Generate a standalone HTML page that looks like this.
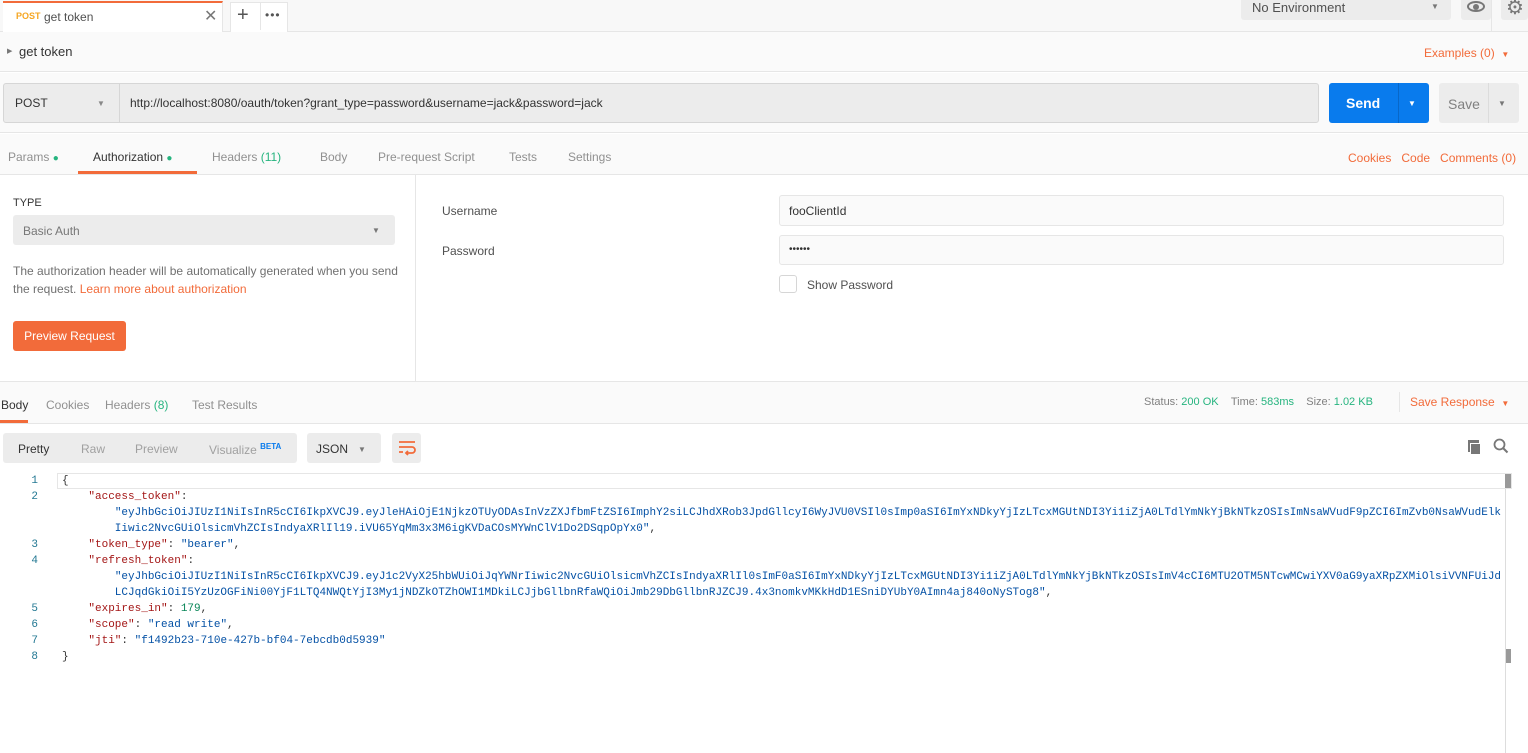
<!DOCTYPE html>
<html><head><meta charset="utf-8"><style>
*{box-sizing:border-box;margin:0;padding:0}
body{width:1528px;height:753px;overflow:hidden;background:#fff;font-family:"Liberation Sans",sans-serif;font-size:12px;color:#505050;position:relative}
.a{position:absolute}
.or{color:#f26b3a}
.gr{color:#26b47f}
.mono{font-family:"Liberation Mono",monospace;font-size:11px;white-space:pre;line-height:16px}
</style></head><body>
<div class="a" style="left:0;top:0;width:1528px;height:32px;background:#f8f8f8;border-bottom:1px solid #e6e6e6"></div>
<div class="a" style="left:3px;top:1px;height:31px;background:#fff;border-top:2px solid #f26b3a;border-right:1px solid #e6e6e6;width:220px"></div>
<div class="a" style="left:16px;top:11px;font-size:9px;font-weight:bold;color:#f5a623">POST</div>
<div class="a" style="left:44px;top:10px;font-size:12px;color:#505050">get token</div>
<div class="a" style="left:204px;top:6px;font-size:16px;color:#777">✕</div>
<div class="a" style="left:230px;top:2px;width:58px;height:30px;background:#fff;border:1px solid #e6e6e6;border-bottom:none"></div>
<div class="a" style="left:260px;top:2px;width:1px;height:28px;background:#e6e6e6"></div>
<div class="a" style="left:237px;top:4px;font-size:20px;color:#555">+</div>
<div class="a" style="left:265px;top:8px;font-size:12px;color:#555;letter-spacing:1px">•••</div>
<div class="a" style="left:1491px;top:0;width:1px;height:32px;background:#e6e6e6"></div>
<div class="a" style="left:1241px;top:0;width:210px;height:20px;background:#ececec;border-radius:0 0 3px 3px"></div>
<div class="a" style="left:1252px;top:0;font-size:13px;color:#505050">No Environment</div>
<div class="a" style="left:1431px;top:2px;font-size:8px;color:#777">▼</div>
<div class="a" style="left:1461px;top:0;width:30px;height:20px;background:#ececec;border-radius:0 0 3px 3px"></div>
<div class="a" style="left:1467px;top:1px;width:18px;height:11px;border:2px solid #777;border-radius:50%"></div>
<div class="a" style="left:1473px;top:4px;width:6px;height:6px;background:#777;border-radius:50%"></div>
<div class="a" style="left:1501px;top:0;width:27px;height:20px;background:#ececec;border-radius:0 0 3px 3px"></div>
<div class="a" style="left:1506px;top:-5px;font-size:20px;color:#777">⚙</div>
<div class="a" style="left:0;top:32px;width:1528px;height:40px;background:#fafafa;border-bottom:1px solid #e6e6e6"></div>
<div class="a" style="left:7px;top:47px;font-size:7px;color:#777">▶</div>
<div class="a" style="left:19px;top:44px;font-size:13px;color:#333">get token</div>
<div class="a or" style="left:1424px;top:46px;font-size:12px">Examples (0)&nbsp;&nbsp;<span style="font-size:8px">▼</span></div>
<div class="a" style="left:0;top:73px;width:1528px;height:60px;background:#fafafa;border-bottom:1px solid #e6e6e6"></div>
<div class="a" style="left:3px;top:83px;width:1316px;height:40px;background:#ececec;border:1px solid #d6d6d6;border-radius:3px"></div>
<div class="a" style="left:119px;top:84px;width:1px;height:38px;background:#d6d6d6"></div>
<div class="a" style="left:15px;top:96px;font-size:12px;color:#333">POST</div>
<div class="a" style="left:97px;top:99px;font-size:8px;color:#888">▼</div>
<div class="a" style="left:130px;top:96px;font-size:12px;color:#333">http://localhost:8080/oauth/token?grant_type=password&amp;username=jack&amp;password=jack</div>
<div class="a" style="left:1329px;top:83px;width:100px;height:40px;background:#097bed;border-radius:3px"></div>
<div class="a" style="left:1398px;top:83px;width:1px;height:40px;background:#0867c8"></div>
<div class="a" style="left:1346px;top:95px;font-size:14px;font-weight:bold;color:#fff">Send</div>
<div class="a" style="left:1408px;top:99px;font-size:8px;color:#fff">▼</div>
<div class="a" style="left:1439px;top:83px;width:80px;height:40px;background:#ececec;border-radius:3px"></div>
<div class="a" style="left:1488px;top:83px;width:1px;height:40px;background:#dcdcdc"></div>
<div class="a" style="left:1448px;top:96px;font-size:14px;color:#808080">Save</div>
<div class="a" style="left:1498px;top:99px;font-size:8px;color:#777">▼</div>
<div class="a" style="left:0;top:134px;width:1528px;height:41px;background:#fafafa;border-bottom:1px solid #e6e6e6"></div>
<div class="a" style="left:8px;top:150px;color:#909090">Params <span class="gr" style="font-size:10px">●</span></div>
<div class="a" style="left:93px;top:150px;color:#333">Authorization <span class="gr" style="font-size:10px">●</span></div>
<div class="a" style="left:78px;top:171px;width:119px;height:3px;background:#f26b3a"></div>
<div class="a" style="left:212px;top:150px;color:#909090">Headers <span class="gr">(11)</span></div>
<div class="a" style="left:320px;top:150px;color:#909090">Body</div>
<div class="a" style="left:378px;top:150px;color:#909090">Pre-request Script</div>
<div class="a" style="left:509px;top:150px;color:#909090">Tests</div>
<div class="a" style="left:568px;top:150px;color:#909090">Settings</div>
<div class="a or" style="left:1348px;top:151px">Cookies&nbsp;&nbsp;&nbsp;Code&nbsp;&nbsp;&nbsp;Comments (0)</div>
<div class="a" style="left:415px;top:175px;width:1px;height:206px;background:#e6e6e6"></div>
<div class="a" style="left:13px;top:197px;font-size:11px;color:#333">TYPE</div>
<div class="a" style="left:13px;top:215px;width:382px;height:30px;background:#ececec;border-radius:3px"></div>
<div class="a" style="left:23px;top:224px;color:#777">Basic Auth</div>
<div class="a" style="left:372px;top:226px;font-size:8px;color:#777">▼</div>
<div class="a" style="left:13px;top:262px;line-height:18px;color:#707070;width:400px">The authorization header will be automatically generated when you send the request. <span class="or">Learn more about authorization</span></div>
<div class="a" style="left:13px;top:321px;width:113px;height:30px;background:#f26b3a;border-radius:3px;color:#fff;font-size:12px;line-height:30px;text-align:center">Preview Request</div>
<div class="a" style="left:442px;top:204px;color:#505050">Username</div>
<div class="a" style="left:442px;top:244px;color:#505050">Password</div>
<div class="a" style="left:779px;top:195px;width:725px;height:31px;background:#fafafa;border:1px solid #e6e6e6;border-radius:3px"></div>
<div class="a" style="left:789px;top:204px;color:#333">fooClientId</div>
<div class="a" style="left:779px;top:235px;width:725px;height:30px;background:#fafafa;border:1px solid #e6e6e6;border-radius:3px"></div>
<div class="a" style="left:789px;top:244px;color:#333;font-size:10px">••••••</div>
<div class="a" style="left:779px;top:275px;width:18px;height:18px;border:1px solid #d6d6d6;border-radius:3px;background:#fff"></div>
<div class="a" style="left:807px;top:278px;color:#505050">Show Password</div>
<div class="a" style="left:0;top:381px;width:1528px;height:43px;background:#fafafa;border-top:1px solid #e6e6e6;border-bottom:1px solid #e6e6e6"></div>
<div class="a" style="left:1px;top:398px;color:#333">Body</div>
<div class="a" style="left:0;top:420px;width:28px;height:3px;background:#f26b3a"></div>
<div class="a" style="left:46px;top:398px;color:#909090">Cookies</div>
<div class="a" style="left:105px;top:398px;color:#909090">Headers <span class="gr">(8)</span></div>
<div class="a" style="left:192px;top:398px;color:#909090">Test Results</div>
<div class="a" style="left:1144px;top:396px;font-size:11px;color:#808080">Status: <span class="gr">200 OK</span>&nbsp;&nbsp;&nbsp;&nbsp;Time: <span class="gr">583ms</span>&nbsp;&nbsp;&nbsp;&nbsp;Size: <span class="gr">1.02 KB</span></div>
<div class="a" style="left:1399px;top:392px;width:1px;height:20px;background:#e6e6e6"></div>
<div class="a or" style="left:1410px;top:395px;font-size:12px">Save Response&nbsp;&nbsp;<span style="font-size:8px">▼</span></div>
<div class="a" style="left:3px;top:433px;width:294px;height:30px;background:#ececec;border-radius:3px"></div>
<div class="a" style="left:18px;top:442px;color:#333">Pretty</div>
<div class="a" style="left:81px;top:442px;color:#a0a0a0">Raw</div>
<div class="a" style="left:135px;top:442px;color:#a0a0a0">Preview</div>
<div class="a" style="left:209px;top:442px;color:#a0a0a0">Visualize <sup style="color:#097bed;font-size:8px;font-weight:bold">BETA</sup></div>
<div class="a" style="left:307px;top:433px;width:74px;height:30px;background:#ececec;border-radius:3px"></div>
<div class="a" style="left:316px;top:442px;color:#333">JSON</div>
<div class="a" style="left:358px;top:445px;font-size:8px;color:#777">▼</div>
<div class="a" style="left:392px;top:433px;width:29px;height:30px;background:#ececec;border-radius:3px"></div>
<svg class="a" style="left:397px;top:440px" width="20" height="16" viewBox="0 0 20 16"><path d="M2 2h16M2 7h13a3 3 0 0 1 0 6H9M11 11l-2 2 2 2M2 12h4" stroke="#f26b3a" stroke-width="1.8" fill="none"/></svg>
<div class="a" style="left:1468px;top:440px;width:11px;height:12px;background:#777"></div>
<div class="a" style="left:1470px;top:443px;width:11px;height:12px;background:#777;border:1px solid #fff"></div>
<svg class="a" style="left:1493px;top:438px" width="16" height="16"><circle cx="6.5" cy="6.5" r="5" stroke="#777" stroke-width="1.8" fill="none"/><path d="M10 10l4.5 4.5" stroke="#777" stroke-width="2"/></svg>
<div class="a" style="left:57px;top:473px;width:1455px;height:16px;border:1px solid #e6e6e6;background:#fff"></div>
<div class="a" style="left:1505px;top:474px;width:6px;height:14px;background:#999"></div>
<div class="a" style="left:1505px;top:649px;width:6px;height:14px;background:#999"></div>
<div class="a" style="left:1505px;top:489px;width:1px;height:264px;background:#ddd"></div>
<div class="a mono" style="left:28px;top:473px;color:#237893;text-align:right;width:10px">1
2


3
4


5
6
7
8</div>
<div class="a mono" style="left:62px;top:473px;color:#333">{
    <span style="color:#a31515">"access_token"</span>:
        <span style="color:#0451a5">"eyJhbGciOiJIUzI1NiIsInR5cCI6IkpXVCJ9.eyJleHAiOjE1NjkzOTUyODAsInVzZXJfbmFtZSI6ImphY2siLCJhdXRob3JpdGllcyI6WyJVU0VSIl0sImp0aSI6ImYxNDkyYjIzLTcxMGUtNDI3Yi1iZjA0LTdlYmNkYjBkNTkzOSIsImNsaWVudF9pZCI6ImZvb0NsaWVudElk
        Iiwic2NvcGUiOlsicmVhZCIsIndyaXRlIl19.iVU65YqMm3x3M6igKVDaCOsMYWnClV1Do2DSqpOpYx0"</span>,
    <span style="color:#a31515">"token_type"</span>: <span style="color:#0451a5">"bearer"</span>,
    <span style="color:#a31515">"refresh_token"</span>:
        <span style="color:#0451a5">"eyJhbGciOiJIUzI1NiIsInR5cCI6IkpXVCJ9.eyJ1c2VyX25hbWUiOiJqYWNrIiwic2NvcGUiOlsicmVhZCIsIndyaXRlIl0sImF0aSI6ImYxNDkyYjIzLTcxMGUtNDI3Yi1iZjA0LTdlYmNkYjBkNTkzOSIsImV4cCI6MTU2OTM5NTcwMCwiYXV0aG9yaXRpZXMiOlsiVVNFUiJd
        LCJqdGkiOiI5YzUzOGFiNi00YjF1LTQ4NWQtYjI3My1jNDZkOTZhOWI1MDkiLCJjbGllbnRfaWQiOiJmb29DbGllbnRJZCJ9.4x3nomkvMKkHdD1ESniDYUbY0AImn4aj840oNySTog8"</span>,
    <span style="color:#a31515">"expires_in"</span>: <span style="color:#098658">179</span>,
    <span style="color:#a31515">"scope"</span>: <span style="color:#0451a5">"read write"</span>,
    <span style="color:#a31515">"jti"</span>: <span style="color:#0451a5">"f1492b23-710e-427b-bf04-7ebcdb0d5939"</span>
}</div>
</body></html>
